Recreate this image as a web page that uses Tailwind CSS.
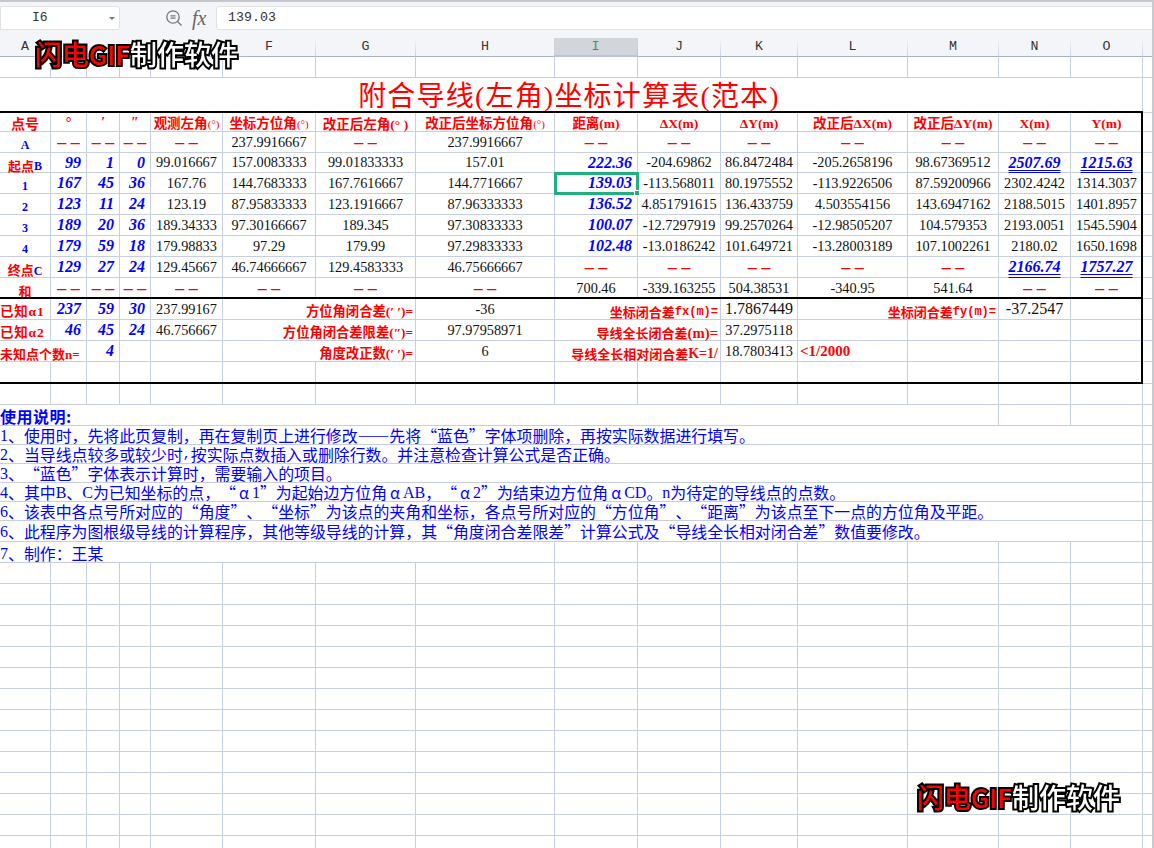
<!DOCTYPE html>
<html lang="zh-CN">

<head>
    <meta charset="UTF-8">
    <title>附合导线坐标计算表</title>
    <script src="https://cdn.jsdelivr.net/npm/@tailwindcss/browser@4"></script>
</head>

<body class="w-[1154px] h-[848px] overflow-hidden bg-white font-['Liberation_Serif','Noto_Sans_CJK_SC',serif]">
    <div class="relative w-[1154px] h-[848px] overflow-hidden">

        <!-- Formula bar -->
        <div class="flex items-start h-[31px] bg-[#f4f5f8] border-t-2 border-[#c4c6ca] pt-[4px]">
            <div class="flex items-center justify-between w-[120px] h-[24px] bg-white border border-[#dfe1e5] rounded-r-[3px] pl-[31px] pr-[4px] font-['Liberation_Mono'] text-[13px] text-[#333]">
                <span>I6</span>
                <span class="border-x-[3px] border-t-[3px] border-x-transparent border-t-[#777]"></span>
            </div>
            <svg class="ml-[45px] mt-[3px]" width="18" height="18" viewBox="0 0 18 18" fill="none" stroke="#777" stroke-width="1.3">
                <circle cx="8" cy="8" r="6.2"></circle>
                <path d="M5.5 6.8h5M5.5 9.2h5M12.5 12.5l4 4"></path>
            </svg>
            <span class="w-[17px] ml-[9px] font-['Liberation_Serif'] italic text-[20px] leading-[24px] text-[#666]">fx</span>
            <div class="flex-1 flex items-center h-[24px] ml-[7px] bg-white border border-[#dfe1e5] rounded-l-[3px] pl-[11px] font-['Liberation_Mono'] text-[13.3px] text-[#333]">139.03</div>
        </div>

        <!-- Column letters -->
        <div class="grid grid-cols-[51px_36px_33px_31px_72px_93px_100px_139px_83px_83px_77px_110px_91px_72px_72px_11px] h-[26px] bg-[#f4f5f8] border-b border-[#aab2c8] font-['Liberation_Mono'] text-[13.3px] text-[#333] text-center leading-[32px] [&>div]:border-r [&>div]:[border-image:linear-gradient(to_bottom,transparent_25%,#b9c2da)_1]">
            <div>A</div><div></div><div></div><div></div><div></div><div>F</div><div>G</div><div>H</div>
            <div class="mt-[7px] -ml-px h-[19px] bg-[#d2d5d9] border-b-2 border-b-[#20b080] text-[#20a07a] leading-[18px]">I</div>
            <div>J</div><div>K</div><div>L</div><div>M</div><div>N</div><div>O</div><div></div>
        </div>

        <!-- Sheet -->
        <div class="grid grid-cols-[51px_36px_33px_31px_72px_93px_100px_139px_83px_83px_77px_110px_91px_72px_72px_11px] grid-rows-[21px_35px_19px_21px_20px_21px_21px_21px_21px_21px_21px_21px_21px_21px_22px_21px_21px_19px_19px_19px_19px_19px_21px_21px] auto-rows-[21px] text-[14.3px] text-[#111] text-center [&>div]:border-r [&>div]:border-b [&>div]:border-[#c6cee2] [&>div]:flex [&>div]:items-center [&>div]:justify-center [&>div]:whitespace-nowrap [&>div]:leading-none">

            <!-- blank row 1 -->
            <div></div><div></div><div></div><div></div><div></div><div></div><div></div><div></div><div></div><div></div><div></div><div></div><div></div><div></div><div></div><div></div>

            <!-- title -->
            <div class="col-span-15 text-[28px] text-[#ff0000] tracking-[1.2px] pt-[3px] pr-[4px]">附合导线(左角)坐标计算表(范本)</div>
            <div></div>

            <!-- header -->
            <div class="font-bold text-[#f00] text-[14px] pt-[5px]">点号</div>
            <div class="font-bold text-[#f00]">°</div>
            <div class="font-bold italic text-[#f00]">′</div>
            <div class="font-bold italic text-[#f00]">″</div>
            <div class="font-bold text-[#f00] text-[13.5px] pt-[4px]">观测左角<span class="font-normal text-[11px]">(°)</span></div>
            <div class="font-bold text-[#f00] text-[13.5px] pt-[4px]">坐标方位角<span class="font-normal text-[11px]">(°)</span></div>
            <div class="font-bold text-[#f00] text-[13.5px] pt-[5px]">改正后左角(° )</div>
            <div class="font-bold text-[#f00] text-[13.5px] pt-[4px]">改正后坐标方位角<span class="font-normal text-[11px]">(°)</span></div>
            <div class="font-bold text-[#f00] text-[13.5px] pt-[4px]">距离(m)</div>
            <div class="font-bold text-[#f00] text-[13.5px] pt-[4px]">ΔX(m)</div>
            <div class="font-bold text-[#f00] text-[13.5px] pt-[4px]">ΔY(m)</div>
            <div class="font-bold text-[#f00] text-[13.5px] pt-[4px]">改正后ΔX(m)</div>
            <div class="font-bold text-[#f00] text-[13.5px] pt-[4px]">改正后ΔY(m)</div>
            <div class="font-bold text-[#f00] text-[13.5px] pt-[4px]">X(m)</div>
            <div class="font-bold text-[#f00] text-[13.5px] pt-[4px]">Y(m)</div>
            <div></div>

            <!-- A -->
            <div class="font-bold text-[#00f] text-[12px] pt-[5px]">A</div>
            <div class="font-bold text-[#f00] text-[18px]">– –</div><div class="font-bold text-[#f00] text-[18px]">– –</div><div class="font-bold text-[#f00] text-[18px]">– –</div><div class="font-bold text-[#f00] text-[18px]">– –</div>
            <div>237.9916667</div>
            <div class="font-bold text-[#f00] text-[18px]">– –</div>
            <div>237.9916667</div>
            <div class="font-bold text-[#f00] text-[18px]">– –</div><div class="font-bold text-[#f00] text-[18px]">– –</div><div class="font-bold text-[#f00] text-[18px]">– –</div><div class="font-bold text-[#f00] text-[18px]">– –</div><div class="font-bold text-[#f00] text-[18px]">– –</div><div class="font-bold text-[#f00] text-[18px]">– –</div><div class="font-bold text-[#f00] text-[18px]">– –</div>
            <div></div>

            <!-- B -->
            <div class="font-bold text-[#f00] text-[13px] pt-[7px]">起点<span class="text-[#00f] text-[12px]">B</span></div>
            <div class="!justify-end pr-[5px] font-bold italic text-[#00f] text-[16px]">99</div>
            <div class="!justify-end pr-[5px] font-bold italic text-[#00f] text-[16px]">1</div>
            <div class="!justify-end pr-[5px] font-bold italic text-[#00f] text-[16px]">0</div>
            <div>99.016667</div>
            <div>157.0083333</div>
            <div>99.01833333</div>
            <div>157.01</div>
            <div class="!justify-end pr-[5px] font-bold italic text-[#00f] text-[16px]">222.36</div>
            <div>-204.69862</div>
            <div>86.8472484</div>
            <div>-205.2658196</div>
            <div>98.67369512</div>
            <div class="font-bold italic text-[#00f] text-[16px] underline decoration-double underline-offset-[2px]">2507.69</div>
            <div class="font-bold italic text-[#00f] text-[16px] underline decoration-double underline-offset-[2px]">1215.63</div>
            <div></div>

            <!-- 1 -->
            <div class="font-bold text-[#00f] text-[12px] pt-[5px]">1</div>
            <div class="!justify-end pr-[5px] font-bold italic text-[#00f] text-[16px]">167</div>
            <div class="!justify-end pr-[5px] font-bold italic text-[#00f] text-[16px]">45</div>
            <div class="!justify-end pr-[5px] font-bold italic text-[#00f] text-[16px]">36</div>
            <div>167.76</div>
            <div>144.7683333</div>
            <div>167.7616667</div>
            <div>144.7716667</div>
            <div class="relative z-10 outline-[3px] -outline-offset-2 outline-[#20b080] !justify-end pr-[5px] font-bold italic text-[#00f] text-[16px]">139.03<span class="absolute -right-[3px] -bottom-[3px] w-[6px] h-[6px] bg-[#20b080] border border-white"></span></div>
            <div>-113.568011</div>
            <div>80.1975552</div>
            <div>-113.9226506</div>
            <div>87.59200966</div>
            <div>2302.4242</div>
            <div>1314.3037</div>
            <div></div>

            <!-- 2 -->
            <div class="font-bold text-[#00f] text-[12px] pt-[5px]">2</div>
            <div class="!justify-end pr-[5px] font-bold italic text-[#00f] text-[16px]">123</div>
            <div class="!justify-end pr-[5px] font-bold italic text-[#00f] text-[16px]">11</div>
            <div class="!justify-end pr-[5px] font-bold italic text-[#00f] text-[16px]">24</div>
            <div>123.19</div>
            <div>87.95833333</div>
            <div>123.1916667</div>
            <div>87.96333333</div>
            <div class="!justify-end pr-[5px] font-bold italic text-[#00f] text-[16px]">136.52</div>
            <div>4.851791615</div>
            <div>136.433759</div>
            <div>4.503554156</div>
            <div>143.6947162</div>
            <div>2188.5015</div>
            <div>1401.8957</div>
            <div></div>

            <!-- 3 -->
            <div class="font-bold text-[#00f] text-[12px] pt-[5px]">3</div>
            <div class="!justify-end pr-[5px] font-bold italic text-[#00f] text-[16px]">189</div>
            <div class="!justify-end pr-[5px] font-bold italic text-[#00f] text-[16px]">20</div>
            <div class="!justify-end pr-[5px] font-bold italic text-[#00f] text-[16px]">36</div>
            <div>189.34333</div>
            <div>97.30166667</div>
            <div>189.345</div>
            <div>97.30833333</div>
            <div class="!justify-end pr-[5px] font-bold italic text-[#00f] text-[16px]">100.07</div>
            <div>-12.7297919</div>
            <div>99.2570264</div>
            <div>-12.98505207</div>
            <div>104.579353</div>
            <div>2193.0051</div>
            <div>1545.5904</div>
            <div></div>

            <!-- 4 -->
            <div class="font-bold text-[#00f] text-[12px] pt-[5px]">4</div>
            <div class="!justify-end pr-[5px] font-bold italic text-[#00f] text-[16px]">179</div>
            <div class="!justify-end pr-[5px] font-bold italic text-[#00f] text-[16px]">59</div>
            <div class="!justify-end pr-[5px] font-bold italic text-[#00f] text-[16px]">18</div>
            <div>179.98833</div>
            <div>97.29</div>
            <div>179.99</div>
            <div>97.29833333</div>
            <div class="!justify-end pr-[5px] font-bold italic text-[#00f] text-[16px]">102.48</div>
            <div>-13.0186242</div>
            <div>101.649721</div>
            <div>-13.28003189</div>
            <div>107.1002261</div>
            <div>2180.02</div>
            <div>1650.1698</div>
            <div></div>

            <!-- C -->
            <div class="font-bold text-[#f00] text-[13px] pt-[7px]">终点<span class="text-[#00f] text-[12px]">C</span></div>
            <div class="!justify-end pr-[5px] font-bold italic text-[#00f] text-[16px]">129</div>
            <div class="!justify-end pr-[5px] font-bold italic text-[#00f] text-[16px]">27</div>
            <div class="!justify-end pr-[5px] font-bold italic text-[#00f] text-[16px]">24</div>
            <div>129.45667</div>
            <div>46.74666667</div>
            <div>129.4583333</div>
            <div>46.75666667</div>
            <div class="font-bold text-[#f00] text-[18px]">– –</div><div class="font-bold text-[#f00] text-[18px]">– –</div><div class="font-bold text-[#f00] text-[18px]">– –</div><div class="font-bold text-[#f00] text-[18px]">– –</div><div class="font-bold text-[#f00] text-[18px]">– –</div>
            <div class="font-bold italic text-[#00f] text-[16px] underline decoration-double underline-offset-[2px]">2166.74</div>
            <div class="font-bold italic text-[#00f] text-[16px] underline decoration-double underline-offset-[2px]">1757.27</div>
            <div></div>

            <!-- sum -->
            <div class="font-bold text-[#f00] text-[13px] pt-[6px]">和</div>
            <div class="font-bold text-[#f00] text-[18px]">– –</div><div class="font-bold text-[#f00] text-[18px]">– –</div><div class="font-bold text-[#f00] text-[18px]">– –</div><div class="font-bold text-[#f00] text-[18px]">– –</div><div class="font-bold text-[#f00] text-[18px]">– –</div><div class="font-bold text-[#f00] text-[18px]">– –</div><div class="font-bold text-[#f00] text-[18px]">– –</div>
            <div>700.46</div>
            <div>-339.163255</div>
            <div>504.38531</div>
            <div>-340.95</div>
            <div>541.64</div>
            <div class="font-bold text-[#f00] text-[18px]">– –</div><div class="font-bold text-[#f00] text-[18px]">– –</div>
            <div></div>

            <!-- closure rows -->
            <div class="font-bold text-[#f00] text-[13.5px] tracking-[0.8px] !justify-start pt-[6px]">已知α1</div>
            <div class="!justify-end pr-[5px] font-bold italic text-[#00f] text-[16px]">237</div>
            <div class="!justify-end pr-[5px] font-bold italic text-[#00f] text-[16px]">59</div>
            <div class="!justify-end pr-[5px] font-bold italic text-[#00f] text-[16px]">30</div>
            <div>237.99167</div>
            <div class="col-span-2 !justify-end pr-[2px] pt-[6px] font-bold text-[#f00] text-[13.3px]">方位角闭合差(′ ′)=</div>
            <div>-36</div>
            <div class="col-span-2 !justify-end pr-[2px] pt-[6px] font-bold text-[#f00] text-[13px]">坐标闭合差<span class="font-['Liberation_Mono'] text-[12px]">fx(m)=</span></div>
            <div class="text-[16px]">1.7867449</div>
            <div class="col-span-2 !justify-end pr-[2px] pt-[6px] font-bold text-[#f00] text-[13px]">坐标闭合差<span class="font-['Liberation_Mono'] text-[12px]">fy(m)=</span></div>
            <div class="text-[16px]">-37.2547</div>
            <div></div>
            <div></div>

            <div class="font-bold text-[#f00] text-[13.5px] tracking-[0.8px] !justify-start pt-[6px]">已知α2</div>
            <div class="!justify-end pr-[5px] font-bold italic text-[#00f] text-[16px]">46</div>
            <div class="!justify-end pr-[5px] font-bold italic text-[#00f] text-[16px]">45</div>
            <div class="!justify-end pr-[5px] font-bold italic text-[#00f] text-[16px]">24</div>
            <div>46.756667</div>
            <div class="col-span-2 !justify-end pr-[2px] pt-[6px] font-bold text-[#f00] text-[13.3px]">方位角闭合差限差(″)=</div>
            <div>97.97958971</div>
            <div class="col-span-2 !justify-end pr-[2px] pt-[6px] font-bold text-[#f00] text-[13px]">导线全长闭合差<span class="text-[14.7px]">(m)=</span></div>
            <div>37.2975118</div>
            <div></div><div></div><div></div><div></div><div></div>

            <div class="col-span-2 font-bold text-[#f00] text-[13px] !justify-start pt-[6px]">未知点个数n=</div>
            <div class="!justify-end pr-[5px] font-bold italic text-[#00f] text-[16px]">4</div>
            <div></div>
            <div></div>
            <div class="col-span-2 !justify-end pr-[2px] pt-[6px] font-bold text-[#f00] text-[13.3px]">角度改正数(′ ′)=</div>
            <div>6</div>
            <div class="col-span-2 !justify-end pr-[2px] pt-[6px] font-bold text-[#f00] text-[13px]">导线全长相对闭合差<span class="text-[14px]">K=1/</span></div>
            <div>18.7803413</div>
            <div class="!justify-start pl-[2px] font-bold text-[#f00] text-[15px]">&lt;1/2000</div>
            <div></div><div></div><div></div><div></div>

            <!-- empty bottom row of the frame -->
            <div></div><div></div><div></div><div></div><div></div><div></div><div></div><div></div><div></div><div></div><div></div><div></div><div></div><div></div><div></div><div></div>
            <!-- row under the frame -->
            <div></div><div></div><div></div><div></div><div></div><div></div><div></div><div></div><div></div><div></div><div></div><div></div><div></div><div></div><div></div><div></div>

            <!-- instructions -->
            <div class="col-span-13 !justify-start pt-[1px] font-bold text-[#00f] text-[16px] tracking-[0.5px] font-['Noto_Sans_CJK_SC']">使用说明:</div>
            <div></div><div></div><div></div>
            <div class="col-span-15 !justify-start pt-[1px] text-[#00f] text-[15.9px] [text-spacing-trim:space-all] font-['Noto_Sans_CJK_SC']"><span class="font-['Liberation_Serif'] text-[16px]">1</span>、使用时&#xFF0C;先将此页复制&#xFF0C;再在复制页上进行修改——先将“蓝色”字体项删除&#xFF0C;再按实际数据进行填写。</div><div></div>
            <div class="col-span-15 !justify-start pt-[1px] text-[#00f] text-[15.9px] [text-spacing-trim:space-all] font-['Noto_Sans_CJK_SC']"><span class="font-['Liberation_Serif'] text-[16px]">2</span>、当导线点较多或较少时<span class="font-['Liberation_Mono'] text-[13.3px]">,</span>按实际点数插入或删除行数。并注意检查计算公式是否正确。</div><div></div>
            <div class="col-span-15 !justify-start pt-[1px] text-[#00f] text-[15.9px] [text-spacing-trim:space-all] font-['Noto_Sans_CJK_SC']"><span class="font-['Liberation_Serif'] text-[16px]">3</span>、“蓝色”字体表示计算时&#xFF0C;需要输入的项目。</div><div></div>
            <div class="col-span-15 !justify-start pt-[1px] text-[#00f] text-[15.9px] [text-spacing-trim:space-all] font-['Noto_Sans_CJK_SC']"><span class="font-['Liberation_Serif'] text-[16px]">4</span>、其中<span class="font-['Liberation_Serif'] text-[16px]">B</span>、<span class="font-['Liberation_Serif'] text-[16px]">C</span>为已知坐标的点&#xFF0C;“<span class="inline-block w-[16px] text-center">α</span><span class="font-['Liberation_Serif'] text-[16px]">1</span>”为起始边方位角<span class="inline-block w-[16px] text-center">α</span><span class="font-['Liberation_Serif'] text-[16px]">AB</span>&#xFF0C;“<span class="inline-block w-[16px] text-center">α</span><span class="font-['Liberation_Serif'] text-[16px]">2</span>”为结束边方位角<span class="inline-block w-[16px] text-center">α</span><span class="font-['Liberation_Serif'] text-[16px]">CD</span>。<span class="font-['Liberation_Serif'] text-[16px]">n</span>为待定的导线点的点数。</div><div></div>
            <div class="col-span-15 !justify-start pt-[1px] text-[#00f] text-[15.9px] [text-spacing-trim:space-all] font-['Noto_Sans_CJK_SC']"><span class="font-['Liberation_Serif'] text-[16px]">6</span>、该表中各点号所对应的“角度”、“坐标”为该点的夹角和坐标&#xFF0C;各点号所对应的“方位角”、“距离”为该点至下一点的方位角及平距。</div><div></div>
            <div class="col-span-15 !justify-start pt-[1px] text-[#00f] text-[15.9px] [text-spacing-trim:space-all] font-['Noto_Sans_CJK_SC']"><span class="font-['Liberation_Serif'] text-[16px]">6</span>、此程序为图根级导线的计算程序&#xFF0C;其他等级导线的计算&#xFF0C;其“角度闭合差限差”计算公式及“导线全长相对闭合差”数值要修改。</div><div></div>
            <div class="col-span-8 !justify-start pt-[3px] text-[#00f] text-[15.9px] [text-spacing-trim:space-all] font-['Noto_Sans_CJK_SC']"><span class="font-['Liberation_Serif'] text-[16px]">7</span>、制作&#xFF1A;王某</div>
            <div></div><div></div><div></div><div></div><div></div><div></div><div></div><div></div>

            <!-- empty sheet below -->
            <div></div><div></div><div></div><div></div><div></div><div></div><div></div><div></div><div></div><div></div><div></div><div></div><div></div><div></div><div></div><div></div>
            <div></div><div></div><div></div><div></div><div></div><div></div><div></div><div></div><div></div><div></div><div></div><div></div><div></div><div></div><div></div><div></div>
            <div></div><div></div><div></div><div></div><div></div><div></div><div></div><div></div><div></div><div></div><div></div><div></div><div></div><div></div><div></div><div></div>
            <div></div><div></div><div></div><div></div><div></div><div></div><div></div><div></div><div></div><div></div><div></div><div></div><div></div><div></div><div></div><div></div>
            <div></div><div></div><div></div><div></div><div></div><div></div><div></div><div></div><div></div><div></div><div></div><div></div><div></div><div></div><div></div><div></div>
            <div></div><div></div><div></div><div></div><div></div><div></div><div></div><div></div><div></div><div></div><div></div><div></div><div></div><div></div><div></div><div></div>
            <div></div><div></div><div></div><div></div><div></div><div></div><div></div><div></div><div></div><div></div><div></div><div></div><div></div><div></div><div></div><div></div>
            <div></div><div></div><div></div><div></div><div></div><div></div><div></div><div></div><div></div><div></div><div></div><div></div><div></div><div></div><div></div><div></div>
            <div></div><div></div><div></div><div></div><div></div><div></div><div></div><div></div><div></div><div></div><div></div><div></div><div></div><div></div><div></div><div></div>
            <div></div><div></div><div></div><div></div><div></div><div></div><div></div><div></div><div></div><div></div><div></div><div></div><div></div><div></div><div></div><div></div>
            <div></div><div></div><div></div><div></div><div></div><div></div><div></div><div></div><div></div><div></div><div></div><div></div><div></div><div></div><div></div><div></div>
            <div></div><div></div><div></div><div></div><div></div><div></div><div></div><div></div><div></div><div></div><div></div><div></div><div></div><div></div><div></div><div></div>
            <div></div><div></div><div></div><div></div><div></div><div></div><div></div><div></div><div></div><div></div><div></div><div></div><div></div><div></div><div></div><div></div>
            <div></div><div></div><div></div><div></div><div></div><div></div><div></div><div></div><div></div><div></div><div></div><div></div><div></div><div></div><div></div><div></div>
        </div>

        <!-- Thick frame drawn over the sheet -->
        <div class="absolute z-20 left-[-2px] top-[111px] w-[1145px] h-[273px] border-2 border-black pointer-events-none"></div>
        <div class="absolute z-20 left-0 top-[297px] w-[1142px] h-[2px] bg-black pointer-events-none"></div>

        <!-- Window edge on the right -->
        <div class="absolute z-20 right-0 top-0 w-[2px] h-full bg-[#c8cacf]"></div>

        <!-- Recorder watermarks -->
        <div class="absolute z-30 left-[35px] top-[33px] text-[27px] leading-[42px] font-medium font-['Noto_Sans_CJK_SC'] text-white whitespace-nowrap [-webkit-text-stroke:4px_black] [paint-order:stroke_fill] drop-shadow-[0_0_1px_white]"><span class="text-[#ff0000]">闪电<span class="text-[26px]">GIF</span></span>制作软件</div>
        <div class="absolute z-30 left-[917px] top-[776px] text-[27px] leading-[42px] font-medium font-['Noto_Sans_CJK_SC'] text-white whitespace-nowrap [-webkit-text-stroke:4px_black] [paint-order:stroke_fill] drop-shadow-[0_0_1px_white]"><span class="text-[#ff0000]">闪电<span class="text-[26px]">GIF</span></span>制作软件</div>
    </div>
</body>

</html>
